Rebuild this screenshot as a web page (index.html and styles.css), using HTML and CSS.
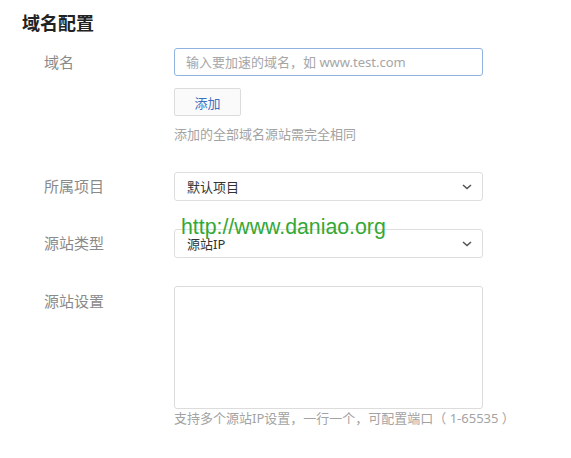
FILE: index.html
```html
<!DOCTYPE html>
<html lang="zh-CN">
<head>
<meta charset="utf-8">
<title>域名配置</title>
<link rel="stylesheet" href="styles.css">
</head>
<body>
<div class="page">
  <h2 class="title">域名配置</h2>
  <div class="form">
    <div class="row row-domain">
      <label class="label">域名</label>
      <div class="control">
        <input class="input" type="text" placeholder="输入要加速的域名，如 www.test.com">
        <button class="btn" type="button">添加</button>
        <div class="hint">添加的全部域名源站需完全相同</div>
      </div>
    </div>
    <div class="row">
      <label class="label">所属项目</label>
      <div class="control">
        <div class="select"><span>默认项目</span>
          <svg class="chev" width="10" height="6" viewBox="0 0 10 6"><path d="M1 1l4 3.5L9 1" fill="none" stroke="#555" stroke-width="1.6"/></svg>
        </div>
      </div>
    </div>
    <div class="row">
      <label class="label">源站类型</label>
      <div class="control">
        <div class="select"><span>源站IP</span>
          <svg class="chev" width="10" height="6" viewBox="0 0 10 6"><path d="M1 1l4 3.5L9 1" fill="none" stroke="#555" stroke-width="1.6"/></svg>
        </div>
      </div>
    </div>
    <div class="row row-text">
      <label class="label">源站设置</label>
      <div class="control">
        <textarea class="textarea"></textarea>
        <div class="hint hint-tight">支持多个源站IP设置，一行一个，可配置端口（ 1-65535 ）</div>
      </div>
    </div>
  </div>
  <div class="watermark">http://www.daniao.org</div>
</div>
</body>
</html>
```
FILE: styles.css
```css
* { box-sizing: border-box; }
html, body { margin: 0; padding: 0; background: #fff; }
body {
  font-family: "Noto Sans", "Noto Sans CJK SC", sans-serif;
  color: #333;
}
.page { position: relative; width: 571px; height: 458px; overflow: hidden; }
.title {
  margin: 0;
  padding: 11px 0 0 22px;
  font-size: 18px;
  line-height: 24px;
  font-weight: 700;
  color: #222;
}
.form { padding: 13px 0 0 44px; }
.row {
  display: grid;
  grid-template-columns: 130px 309px;
  margin-bottom: 28px;
}
.row-domain { margin-bottom: 29px; }
.label {
  font-size: 15px;
  line-height: 29px;
  color: #8a8a8a;
}
.row-domain .label { line-height: 28px; }
.row-text .label { line-height: 30px; }
.control { display: flex; flex-direction: column; align-items: flex-start; }
.input {
  width: 309px;
  height: 28px;
  border: 1px solid #8fb2de;
  border-radius: 3px;
  padding: 0 11px;
  font-family: inherit;
  font-size: 13px;
  color: #333;
  outline: none;
}
.input::placeholder { color: #a6a6a6; }
.btn {
  margin-top: 12px;
  width: 67px;
  height: 28px;
  border: 1px solid #dcdcdc;
  border-radius: 2px;
  background: #fafafa;
  color: #3a72c2;
  font-family: inherit;
  font-size: 13px;
  padding: 0;
}
.hint {
  margin-top: 9px;
  font-size: 13px;
  line-height: 18px;
  color: #a3a3a3;
  white-space: nowrap;
}
.hint-tight { margin-top: 0; }
.select {
  width: 309px;
  height: 29px;
  border: 1px solid #dedede;
  border-radius: 3px;
  display: flex;
  align-items: center;
  justify-content: space-between;
  padding: 0 10px 0 12px;
  font-size: 13px;
  color: #333;
}
.textarea {
  display: block;
  width: 309px;
  height: 123px;
  border: 1px solid #dcdcdc;
  border-radius: 3px;
  resize: none;
  outline: none;
}
.watermark {
  position: absolute;
  left: 181px;
  top: 213px;
  font-family: "Liberation Sans", Arial, sans-serif;
  font-size: 21.3px;
  line-height: 28px;
  color: #34a834;
}
```
